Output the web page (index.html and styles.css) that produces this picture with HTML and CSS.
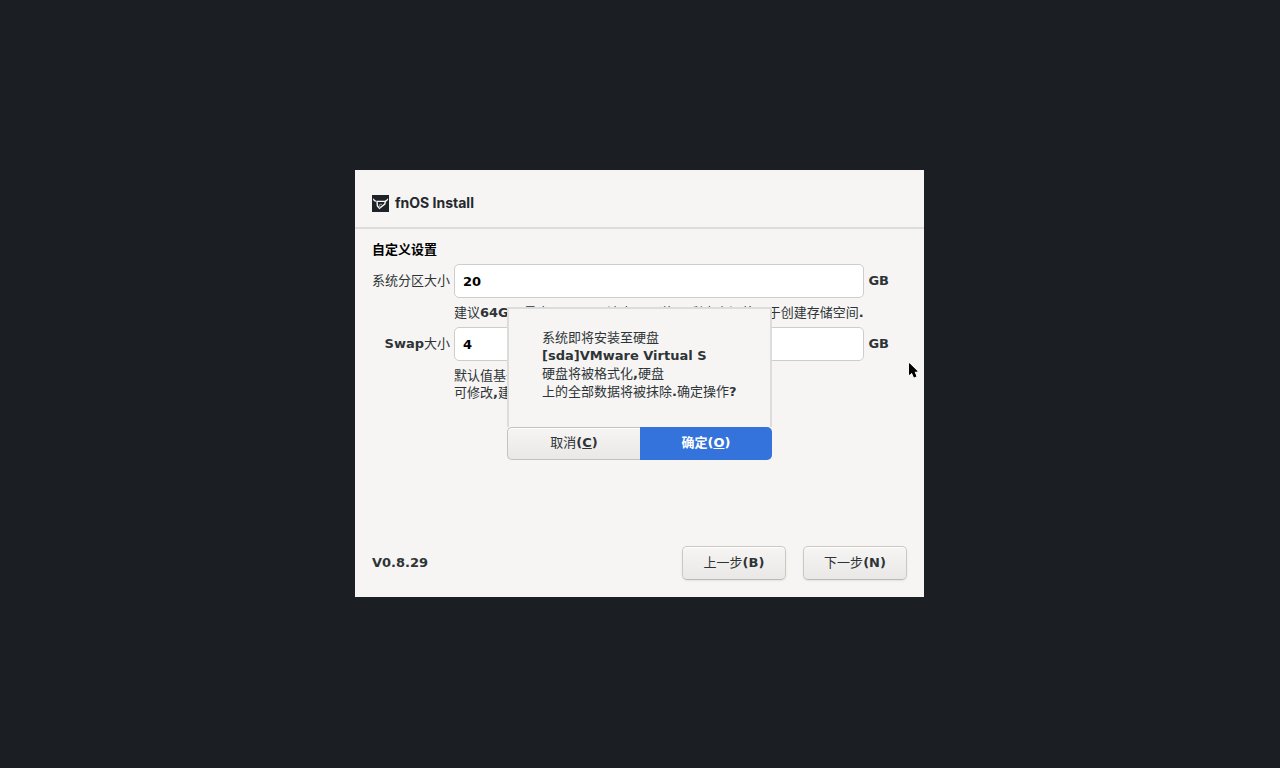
FILE: index.html
```html
<!DOCTYPE html>
<html lang="zh-CN">
<head>
    <meta charset="UTF-8">
    <meta name="viewport" content="width=device-width, initial-scale=1.0">
    <title>fnOS Install</title>
    <link rel="stylesheet" href="styles.css">
</head>
<body>
    <main class="window">
        <header class="header">
            <svg class="logo" viewBox="0 0 17 17" aria-hidden="true">
                <rect width="17" height="17" fill="#1f2328"/>
                <path d="M1.5 3.8 Q1.6 6 4 6.2 M15.6 3.8 Q15.4 6 13 6.2" fill="none" stroke="#f6f5f4" stroke-width="1.2"/>
                <path d="M5 6.4 H13.4 L12.8 9 L7.4 13.2 L5.4 11 Z" fill="none" stroke="#f6f5f4" stroke-width="1.4"/>
                <path d="M7.6 13 V9.4 H10" fill="none" stroke="#8d9092"/>
            </svg>
            <h1>fnOS Install</h1>
        </header>

        <form class="settings">
            <h2>自定义设置</h2>
            <div class="fields">
                <label for="systemSize">系统分区大小</label>
                <input type="text" id="systemSize" value="20">
                <b>GB</b>
                <p class="hint">建议<b>64GB,</b>最大<b>128GB, </b>该步不可逆<b>,</b>且剩余空间将用于创建存储空间<b>.</b></p>

                <label for="swapSize"><b>Swap</b>大小</label>
                <input type="text" id="swapSize" value="4">
                <b>GB</b>
                <p class="hint">默认值基于内<br>可修改<b>,</b>建议</p>
            </div>
        </form>

        <footer class="footer">
            <b class="version">V0.8.29</b>
            <button type="button" class="button">上一步<b>(B)</b></button>
            <button type="button" class="button">下一步<b>(N)</b></button>
        </footer>

        <!-- Confirm dialog -->
        <div class="dialog" role="alertdialog" aria-labelledby="dialogText">
            <p id="dialogText">系统即将安装至硬盘<br><b>[sda]VMware Virtual S</b><br>硬盘将被格式化<b>,</b>硬盘<br>上的全部数据将被抹除<b>.</b>确定操作<b>?</b></p>
            <div class="dialog-buttons">
                <button type="button" class="cancel">取消<b>(<u>C</u>)</b></button>
                <button type="button" class="confirm">确定<b>(<u>O</u>)</b></button>
            </div>
        </div>

        <svg class="cursor" viewBox="0 0 11 17" aria-hidden="true">
            <path d="M1.5 1.5 V13 L4 10.5 L6 15 L8 14 L6.2 9.5 H9.5 Z" fill="#000" stroke="#fff" stroke-width="1" paint-order="stroke"/>
            <path d="M1 1 V13 L3.8 10.4 L6 15.4 L8.4 14.4 L6.4 9.6 H9.8 Z" fill="#000"/>
        </svg>
    </main>
</body>
</html>
```
FILE: styles.css
```css
* {
    box-sizing: border-box;
}
body {
    margin: 0;
    padding: 0 1px 1px 0;
    min-height: 100vh;
    display: flex;
    justify-content: center;
    align-items: center;
    background: #1b1f23;
    color: #2e3436;
    font-family: "DejaVu Sans", "Noto Sans CJK SC", sans-serif;
    font-size: 13px;
    line-height: 18px;
}
h1, h2, p {
    margin: 0;
}
button, input {
    font: inherit;
    color: inherit;
}
.window {
    position: relative;
    display: flex;
    flex-direction: column;
    width: 100%;
    max-width: 569px;
    background: #f6f5f4;
}
.header {
    display: flex;
    align-items: center;
    gap: 6px;
    padding: 24px 17px 15px;
    border-bottom: 2px solid #dcdcda;
}
.logo {
    width: 17px;
    height: 17px;
}
h1 {
    font: 700 14px/18px Inter, sans-serif;
    color: #24282d;
}
.settings {
    padding: 12px 35px 0 17px;
}
h2 {
    font-size: 13px;
    line-height: 18px;
    color: #000;
}
.fields {
    display: grid;
    grid-template-columns: auto 1fr auto;
    align-items: center;
    gap: 6px 4px;
    margin-top: 5px;
}
.fields label {
    grid-column: 1;
    text-align: right;
    white-space: nowrap;
}
.fields input {
    width: 100%;
    min-width: 0;
    height: 34px;
    padding: 0 8px;
    border: 1px solid #cdcdcd;
    border-radius: 5px;
    background: #fff;
    color: #000;
    font-weight: bold;
}
.hint {
    grid-column: 2;
    line-height: 17px;
    white-space: nowrap;
}
.footer {
    display: flex;
    align-items: center;
    gap: 17px;
    padding: 145px 17px 17px;
}
.version {
    margin-right: auto;
}
.button {
    width: 104px;
    height: 34px;
    padding: 0;
    border: 1px solid #cdc7c2;
    border-bottom-color: #bfb8b1;
    border-radius: 5px;
    background: linear-gradient(#f6f5f4, #e9e8e6);
    box-shadow: inset 0 1px #fff, 0 1px 2px rgba(0, 0, 0, 0.08);
}

/* Confirm dialog */
.dialog {
    position: absolute;
    inset: 0;
    margin: auto;
    width: 265px;
    height: fit-content;
    background: #f6f5f4;
}
.dialog p {
    padding: 20px 0 26px 33px;
    border: 2px solid #dcdcdc;
    border-bottom: 0;
    white-space: nowrap;
}
.dialog-buttons {
    display: flex;
}
.dialog-buttons button {
    flex: 1;
    height: 33px;
    padding: 0 0 2px;
}
.dialog-buttons .cancel {
    border: 1px solid #c5c1bb;
    border-right: 0;
    border-radius: 5px 0 0 5px;
    background: linear-gradient(#f6f5f4, #e9e8e6);
    box-shadow: inset 0 1px #fff;
}
.dialog-buttons .confirm {
    border: 0;
    border-radius: 0 5px 5px 0;
    background: #3473db;
    color: #fff;
    font-weight: bold;
}

.cursor {
    position: absolute;
    right: 5px;
    top: 192px;
    width: 11px;
    height: 17px;
}
```
